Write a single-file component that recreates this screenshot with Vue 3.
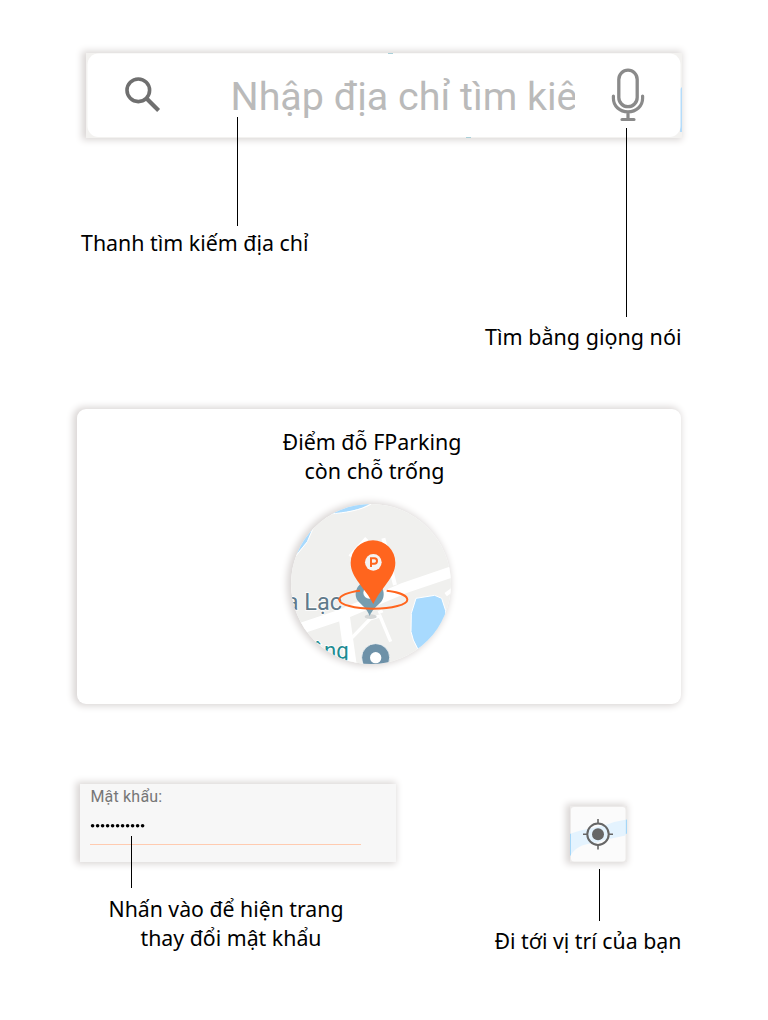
<script setup>
const dots = Array.from({ length: 11 }, (_, i) => 2.6 + i * 5)
</script>

<template>
  <main class="page">
    <section class="search card">
      <svg class="edges" viewBox="0 0 596 85" width="596" height="85">
        <rect width="596" height="85" fill="#f3f2f0" />
        <path d="M594 36l2-2v45h-2z" fill="#b5dcfa" />
        <rect x="1.5" y="0.5" width="593" height="83.5" rx="11" fill="#fff" />
        <path d="M302 0h5v1h-5zM380 84h5v1h-5z" fill="#a8cfd8" />
      </svg>
      <div class="search-row">
        <svg class="icon-search" viewBox="0 0 36 36" width="36" height="36">
          <circle cx="13.3" cy="13.3" r="11.3" fill="none" stroke="#6f6f6f" stroke-width="3.6" />
          <path d="M21.8 21.8L33.6 33.6" stroke="#6f6f6f" stroke-width="4.2" />
        </svg>
        <svg class="placeholder" width="345" height="60" viewBox="230 70 345 60">
          <text x="230.5" y="110" textLength="347" lengthAdjust="spacingAndGlyphs">Nhập địa chỉ tìm kiê</text>
        </svg>
        <svg class="icon-mic" viewBox="0 0 34 54" width="34" height="54" fill="none" stroke="#8a8a8a">
          <rect x="7.8" y="2.2" width="18.4" height="36.5" rx="9.2" stroke-width="3.3" />
          <path d="M2.4 28v2.2c0 8 6.4 13.6 14.6 13.6s14.6-5.6 14.6-13.6V28M17 44v7.5M11 51.5h12" stroke-width="3.2" stroke-linecap="round" />
        </svg>
      </div>
      <i class="line line-search"></i>
      <i class="line line-mic"></i>
    </section>

    <svg class="label label-search" width="240" height="40" viewBox="76 225 240 40">
      <text x="81" y="251" textLength="227.5" lengthAdjust="spacingAndGlyphs">Thanh tìm kiếm địa chỉ</text>
    </svg>
    <svg class="label label-voice" width="210" height="40" viewBox="480 319 210 40">
      <text x="485" y="345" textLength="196.5" lengthAdjust="spacingAndGlyphs">Tìm bằng giọng nói</text>
    </svg>

    <section class="parking card">
      <svg class="label" width="200" height="70" viewBox="271 423 200 70">
        <text x="282.5" y="450" textLength="179" lengthAdjust="spacingAndGlyphs">Điểm đỗ FParking</text>
        <text x="304.5" y="479" textLength="140" lengthAdjust="spacingAndGlyphs">còn chỗ trống</text>
      </svg>
      <div class="map">
        <svg viewBox="63 42 480 480" width="160" height="160">
          <rect x="60" y="40" width="490" height="490" fill="#f0f0ee" />
          <path d="M180 72C225 68 270 62 304 38H180zM60 215L112 155 134 100 60 100z" fill="#a8dafe" />
          <path d="M180 72C225 68 270 62 304 42M72 205L112 155 134 104" fill="none" stroke="#fff" stroke-width="3" />
          <g fill="none" stroke="#fff">
            <path d="M85 418L210 376L400 295L550 244" stroke-width="33" />
            <path d="M222 375L243 525" stroke-width="34" />
            <path d="M244 445L300 387L330 378L362 455M325 368L338 362" stroke-width="10" />
            <path d="M340 145L375 285M240 200L290 145" stroke-width="12" />
            <path d="M527 314L550 297" stroke-width="12" />
          </g>
          <path d="M438 325L494 316 515 325 527 362 527 400 470 460 444 478 430 450 423 425 424 370z" fill="#a8dafe" stroke="#fff" stroke-width="3" />
          <ellipse cx="302" cy="380" rx="18" ry="7" fill="#d5d7d7" />
          <path d="M257 313a42 42 0 0 1 84 0c0 29-25 29-42 65c-13-36-42-37-42-65z" fill="#779daf" />
          <circle cx="298" cy="308" r="18" fill="#fff" />
          <g class="place">
            <text x="47" y="360" textLength="169" lengthAdjust="spacingAndGlyphs">a Lạc</text>
            <text class="teal" x="124" y="506" textLength="112" lengthAdjust="spacingAndGlyphs">ông</text>
          </g>
          <circle cx="317" cy="503" r="42" fill="#6d91a8" stroke="#fff" stroke-width="2" />
          <circle cx="317" cy="503" r="17" fill="#fff" />
          <path d="M270 302C235 306 208 317 208 329c0 15 46 27 102 27s102-12 102-27c0-13-28-23-62-27" fill="none" stroke="#ff651e" stroke-width="6" />
          <path d="M310 342C285 292 242 263 242 218a67 67 0 0 1 134 0c0 45-43 74-66 124z" fill="#ff651e" />
          <circle cx="310" cy="217" r="25" fill="#f5f3f2" />
          <path d="M303 231v-26h10a8 8 0 0 1 0 16h-10" fill="none" stroke="#ff651e" stroke-width="6" />
        </svg>
      </div>
    </section>

    <div class="bottom">
      <section class="password card">
        <div class="field-label">Mật khẩu:</div>
        <svg class="dots" width="56" height="6" viewBox="0 0 56 6">
          <circle v-for="x in dots" :key="x" :cx="x" cy="2.7" r="1.8" />
        </svg>
        <div class="rule"></div>
        <i class="line line-password"></i>
      </section>

      <section class="locate card">
        <svg viewBox="0 0 57 56" width="57" height="56">
          <rect width="57" height="56" fill="#eceae9" />
          <path d="M0 28l4-2v20l-4 4zM53 14.5L57 13.5v14l-4 2z" fill="#a5d6f7" />
          <rect x="1" y="1" width="54.5" height="54.5" rx="3" fill="#fbfbfb" />
          <path d="M1 27.5C15 22 30 22 44 16L55.5 13.8V29.5L32 34.5C20 40 11 35 1 48.5z" fill="#e4f3fe" />
          <g fill="none" stroke="#666">
            <circle cx="28" cy="28.2" r="10.7" stroke-width="2" />
            <path d="M28 13v4.5M28 39v4.5M13 28.2h4.5M38.5 28.2H43" stroke-width="1.6" />
          </g>
          <circle cx="28" cy="28.2" r="6" fill="#666" />
        </svg>
        <i class="line line-locate"></i>
      </section>
    </div>

    <div class="captions">
      <svg class="label" width="250" height="70" viewBox="100 890 250 70">
        <text x="108.5" y="917" textLength="235" lengthAdjust="spacingAndGlyphs">Nhấn vào để hiện trang</text>
        <text x="140.5" y="946" textLength="181" lengthAdjust="spacingAndGlyphs">thay đổi mật khẩu</text>
      </svg>
      <svg class="label" width="200" height="70" viewBox="490 890 200 70">
        <text x="494.5" y="949" textLength="187" lengthAdjust="spacingAndGlyphs">Đi tới vị trí của bạn</text>
      </svg>
    </div>
  </main>
</template>

<style>
body {
  margin: 0;
  background: #fff;
}
</style>

<style scoped>
.page {
  display: flex;
  flex-direction: column;
  align-items: flex-start;
  box-sizing: border-box;
  width: 768px;
  height: 1020px;
  padding-top: 53px;
  overflow: hidden;
  background: #fff;
}
svg {
  display: block;
  flex: none;
}
.card {
  position: relative;
  flex: none;
  box-shadow: -2px 0 7px 2px #dad6d5;
}
.label {
  overflow: visible;
}
.label text {
  font: 22.4px "Noto Sans", "Open Sans", sans-serif;
  fill: #000;
}
.line {
  position: absolute;
  width: 1px;
  background: #000;
}
.search {
  width: 596px;
  height: 85px;
  margin-left: 86px;
}
.edges {
  position: absolute;
  inset: 0;
}
.search-row {
  position: relative;
  display: flex;
  align-items: flex-start;
}
.icon-search {
  margin: 23.5px 0 0 39px;
}
.placeholder {
  margin: 17px 0 0 69px;
  overflow: hidden;
}
.placeholder text {
  font: 39.5px Roboto, sans-serif;
  fill: #bababa;
}
.icon-mic {
  margin: 15px 0 0 36px;
}
.line-search {
  left: 151px;
  top: 64px;
  height: 109px;
}
.line-mic {
  left: 540px;
  top: 75px;
  height: 189px;
}
.label-search {
  margin: 87px 0 0 76px;
}
.label-voice {
  margin: 54px 0 0 480px;
}
.parking {
  display: flex;
  flex-direction: column;
  align-items: center;
  box-sizing: border-box;
  width: 604px;
  height: 295px;
  margin: 50px 0 0 77px;
  padding: 14px 16px 0 0;
  border-radius: 9px;
  background: #fff;
}
.map {
  width: 160px;
  height: 160px;
  margin-top: 11px;
  border-radius: 50%;
  box-shadow: -2px 0 7px 2px #dad6d5;
}
.map svg {
  border-radius: 50%;
}
.place text {
  font: 74px Roboto, sans-serif;
  fill: #60798a;
  stroke: #fff;
  stroke-width: 5px;
  paint-order: stroke;
}
.place .teal {
  fill: #1d8b91;
}
.bottom {
  display: flex;
  align-items: flex-start;
  margin: 80px 0 0 80px;
}
.password {
  box-sizing: border-box;
  width: 316px;
  height: 78px;
  padding: 4px 0 0 10.4px;
  background: #f7f7f7;
}
.field-label {
  height: 18px;
  font: 16px/18px Roboto, sans-serif;
  letter-spacing: 0.2px;
  color: #767676;
}
.dots {
  margin-top: 17px;
}
.rule {
  width: 271px;
  height: 1px;
  margin-top: 15px;
  background: #ffcbb0;
}
.line-password {
  left: 51px;
  top: 52px;
  height: 52px;
}
.locate {
  width: 57px;
  height: 56px;
  margin: 22px 0 0 174px;
}
.line-locate {
  left: 29px;
  top: 63px;
  height: 52px;
}
.captions {
  display: flex;
  gap: 140px;
  margin: 28px 0 0 100px;
}
</style>
